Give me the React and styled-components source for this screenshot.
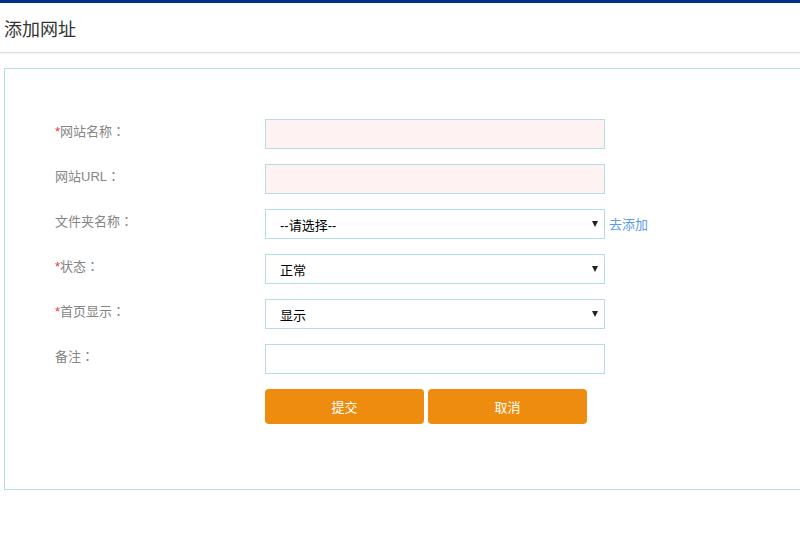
import React from 'react'
import styled, { createGlobalStyle } from 'styled-components'

const GlobalStyle = createGlobalStyle`
  html, body {
    margin: 0;
    padding: 0;
    background: #fff;
    overflow: hidden;
    font-family: "Liberation Sans", Arial, "Noto Sans CJK SC", sans-serif;
  }
`;

const Page = styled.div`
  width: 800px;
  height: 560px;
  border-top: 3px solid #003087;
  box-sizing: border-box;
`;

const Header = styled.div`
  height: 49px;
  border-bottom: 1px solid #dcdcdc;
  box-shadow: 0 1px 2px rgba(0, 0, 0, 0.05);
  display: flex;
  align-items: center;
  padding-left: 4px;
`;

const Title = styled.h2`
  margin: 0;
  font-size: 18px;
  font-weight: normal;
  color: #333;
`;

const Panel = styled.div`
  margin: 15px 0 0 4px;
  width: 820px;
  height: 422px;
  border: 1px solid #b4dde6;
  box-sizing: border-box;
  padding: 50px 0 0 50px;
`;

const Form = styled.form`
  display: flex;
  flex-direction: column;
  gap: 15px;
`;

const Row = styled.div`
  display: flex;
  align-items: flex-start;
  height: 30px;
`;

const Label = styled.label`
  width: 210px;
  height: 30px;
  font-size: 13px;
  color: #858585;
  line-height: 26px;
`;

const Star = styled.span`
  color: #e4393c;
`;

const Colon = styled.span`
  font-family: "Noto Sans CJK TC", sans-serif;
  line-height: 1;
`;

const Input = styled.input`
  width: 340px;
  height: 30px;
  box-sizing: border-box;
  border: 1px solid #b4dde6;
  background: ${p => (p.$pink ? '#fff2f2' : '#fff')};
  outline: none;
  padding: 0 14px;
  font-size: 13px;
  font-family: inherit;
`;

const SelectBox = styled.div`
  position: relative;
  width: 340px;
  height: 30px;
  box-sizing: border-box;
  border: 1px solid #b4dde6;
  background: #fff;
  display: flex;
  align-items: center;
  padding: 0 14px;
  font-size: 13px;
  color: #000;
`;

const Arrow = styled.span`
  position: absolute;
  right: 6px;
  top: 11px;
  width: 0;
  height: 0;
  border-left: 3.5px solid transparent;
  border-right: 3.5px solid transparent;
  border-top: 6px solid #222;
`;

const AddLink = styled.a`
  margin-left: 4px;
  font-size: 13px;
  color: #5b9bef;
  line-height: 32px;
  text-decoration: none;
`;

const Buttons = styled.div`
  display: flex;
  gap: 4px;
  margin-left: 210px;
`;

const Button = styled.button`
  width: 159px;
  height: 35px;
  border: none;
  border-radius: 4px;
  background: #ee8c0f;
  color: #fff;
  font-size: 13px;
  font-family: inherit;
  cursor: pointer;
`;

function Select({ value }) {
    return (
        <SelectBox>
            {value}
            <Arrow />
        </SelectBox>
    )
}

function FieldLabel({ required, children }) {
    return (
        <Label>
            {required && <Star>*</Star>}
            {children}
            <Colon>：</Colon>
        </Label>
    )
}

export default function App() {
    return (
        <Page>
            <GlobalStyle />
            <Header>
                <Title>添加网址</Title>
            </Header>
            <Panel>
                <Form>
                    <Row>
                        <FieldLabel required>网站名称</FieldLabel>
                        <Input $pink />
                    </Row>
                    <Row>
                        <FieldLabel>网站URL</FieldLabel>
                        <Input $pink />
                    </Row>
                    <Row>
                        <FieldLabel>文件夹名称</FieldLabel>
                        <Select value="--请选择--" />
                        <AddLink href="#">去添加</AddLink>
                    </Row>
                    <Row>
                        <FieldLabel required>状态</FieldLabel>
                        <Select value="正常" />
                    </Row>
                    <Row>
                        <FieldLabel required>首页显示</FieldLabel>
                        <Select value="显示" />
                    </Row>
                    <Row>
                        <FieldLabel>备注</FieldLabel>
                        <Input />
                    </Row>
                    <Buttons>
                        <Button type="button">提交</Button>
                        <Button type="button">取消</Button>
                    </Buttons>
                </Form>
            </Panel>
        </Page>
    )
}
